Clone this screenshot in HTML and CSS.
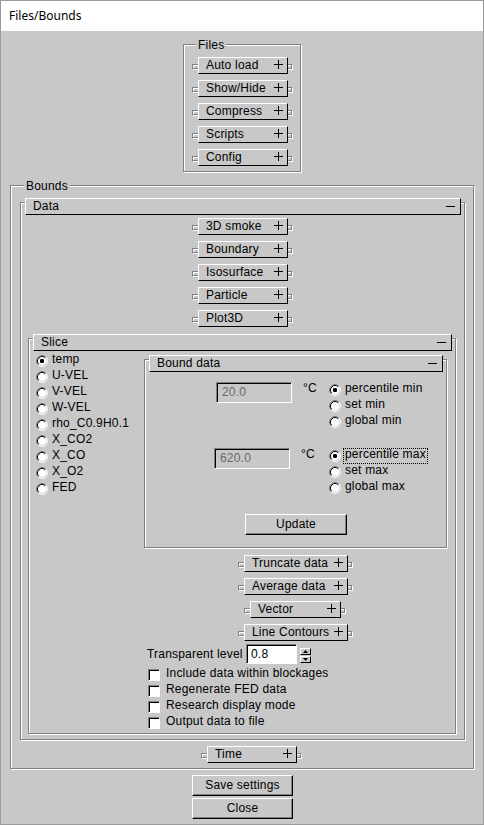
FILE: index.html
```html
<!DOCTYPE html>
<html>
<head>
<meta charset="utf-8">
<title>Files/Bounds</title>
<link rel="stylesheet" href="styles.css">
</head>
<body>
<svg class="defs" width="0" height="0" aria-hidden="true">
  <symbol id="radio-off" viewBox="0 0 12 12">
    <circle cx="6" cy="6" r="4.5" fill="#fff"/>
    <path d="M2.11 9.89A5.5 5.5 0 0 1 9.89 2.11" fill="none" stroke="#808080"/>
    <path d="M9.89 2.11A5.5 5.5 0 0 1 2.11 9.89" fill="none" stroke="#fff"/>
    <path d="M2.82 9.18A4.5 4.5 0 0 1 9.18 2.82" fill="none" stroke="#000"/>
    <path d="M9.18 2.82A4.5 4.5 0 0 1 2.82 9.18" fill="none" stroke="#dcdcdc"/>
  </symbol>
  <symbol id="radio-on" viewBox="0 0 12 12">
    <circle cx="6" cy="6" r="4.5" fill="#fff"/>
    <path d="M2.11 9.89A5.5 5.5 0 0 1 9.89 2.11" fill="none" stroke="#808080"/>
    <path d="M9.89 2.11A5.5 5.5 0 0 1 2.11 9.89" fill="none" stroke="#fff"/>
    <path d="M2.82 9.18A4.5 4.5 0 0 1 9.18 2.82" fill="none" stroke="#000"/>
    <path d="M9.18 2.82A4.5 4.5 0 0 1 2.82 9.18" fill="none" stroke="#dcdcdc"/>
    <rect x="4" y="4" width="4" height="4" rx="1.2" fill="#000"/>
  </symbol>
  <symbol id="plus" viewBox="0 0 9 9">
    <path d="M0 4.5H9M4.5 0V9" stroke="#000" stroke-width="1"/>
  </symbol>
  <symbol id="minus" viewBox="0 0 9 1">
    <path d="M0 0.5H9" stroke="#000" stroke-width="1"/>
  </symbol>
</svg>

<div class="window">
  <div class="titlebar">Files/Bounds</div>
  <div class="client">

    <div class="panel files">
      <div class="legend">Files</div>
      <div class="roll roll--files first"><div class="rbtn"><span>Auto load</span><svg class="plus"><use href="#plus"/></svg></div></div>
      <div class="roll roll--files"><div class="rbtn"><span>Show/Hide</span><svg class="plus"><use href="#plus"/></svg></div></div>
      <div class="roll roll--files"><div class="rbtn"><span>Compress</span><svg class="plus"><use href="#plus"/></svg></div></div>
      <div class="roll roll--files"><div class="rbtn"><span>Scripts</span><svg class="plus"><use href="#plus"/></svg></div></div>
      <div class="roll roll--files"><div class="rbtn"><span>Config</span><svg class="plus"><use href="#plus"/></svg></div></div>
    </div>

    <div class="panel bounds">
      <div class="legend">Bounds</div>

      <div class="rollout data">
        <div class="rhead"><span>Data</span><svg class="minus"><use href="#minus"/></svg></div>
        <div class="roll roll--data first"><div class="rbtn"><span>3D smoke</span><svg class="plus"><use href="#plus"/></svg></div></div>
        <div class="roll roll--data"><div class="rbtn"><span>Boundary</span><svg class="plus"><use href="#plus"/></svg></div></div>
        <div class="roll roll--data"><div class="rbtn"><span>Isosurface</span><svg class="plus"><use href="#plus"/></svg></div></div>
        <div class="roll roll--data"><div class="rbtn"><span>Particle</span><svg class="plus"><use href="#plus"/></svg></div></div>
        <div class="roll roll--data"><div class="rbtn"><span>Plot3D</span><svg class="plus"><use href="#plus"/></svg></div></div>

        <div class="rollout slice">
          <div class="rhead"><span>Slice</span><svg class="minus"><use href="#minus"/></svg></div>
          <div class="slice-body">
            <div class="radio-list">
              <div class="rrow"><svg class="radio"><use href="#radio-on"/></svg><span>temp</span></div>
              <div class="rrow"><svg class="radio"><use href="#radio-off"/></svg><span>U-VEL</span></div>
              <div class="rrow"><svg class="radio"><use href="#radio-off"/></svg><span>V-VEL</span></div>
              <div class="rrow"><svg class="radio"><use href="#radio-off"/></svg><span>W-VEL</span></div>
              <div class="rrow"><svg class="radio"><use href="#radio-off"/></svg><span>rho_C0.9H0.1</span></div>
              <div class="rrow"><svg class="radio"><use href="#radio-off"/></svg><span>X_CO2</span></div>
              <div class="rrow"><svg class="radio"><use href="#radio-off"/></svg><span>X_CO</span></div>
              <div class="rrow"><svg class="radio"><use href="#radio-off"/></svg><span>X_O2</span></div>
              <div class="rrow"><svg class="radio"><use href="#radio-off"/></svg><span>FED</span></div>
            </div>

            <div class="slice-right">
              <div class="rollout bound">
                <div class="rhead"><span>Bound data</span><svg class="minus"><use href="#minus"/></svg></div>
                <div class="brow">
                  <div class="tbox tbox--off">20.0</div>
                  <div class="unit">°C</div>
                  <div class="rgroup">
                    <div class="rrow"><svg class="radio"><use href="#radio-on"/></svg><span>percentile min</span></div>
                    <div class="rrow"><svg class="radio"><use href="#radio-off"/></svg><span>set min</span></div>
                    <div class="rrow"><svg class="radio"><use href="#radio-off"/></svg><span>global min</span></div>
                  </div>
                </div>
                <div class="brow brow--max">
                  <div class="tbox tbox--off">620.0</div>
                  <div class="unit">°C</div>
                  <div class="rgroup">
                    <div class="rrow"><svg class="radio"><use href="#radio-on"/></svg><span class="focus">percentile max</span></div>
                    <div class="rrow"><svg class="radio"><use href="#radio-off"/></svg><span>set max</span></div>
                    <div class="rrow"><svg class="radio"><use href="#radio-off"/></svg><span>global max</span></div>
                  </div>
                </div>
                <div class="btn update">Update</div>
              </div>

              <div class="roll roll--w first"><div class="rbtn"><span>Truncate data</span><svg class="plus"><use href="#plus"/></svg></div></div>
              <div class="roll roll--w"><div class="rbtn"><span>Average data</span><svg class="plus"><use href="#plus"/></svg></div></div>
              <div class="roll roll--v"><div class="rbtn"><span>Vector</span><svg class="plus"><use href="#plus"/></svg></div></div>
              <div class="roll roll--w"><div class="rbtn"><span>Line Contours</span><svg class="plus"><use href="#plus"/></svg></div></div>

              <div class="trow">
                <div class="tlabel">Transparent level</div>
                <div class="tbox tbox--small">0.8</div>
                <div class="spin">
                  <div class="spin-b"><svg class="arr" viewBox="0 0 5 3"><path d="M2.5 0L5 3H0Z" fill="#000"/></svg></div>
                  <div class="spin-b"><svg class="arr" viewBox="0 0 5 3"><path d="M0 0H5L2.5 3Z" fill="#000"/></svg></div>
                </div>
              </div>

              <div class="checks">
                <div class="crow"><div class="cb"></div><span>Include data within blockages</span></div>
                <div class="crow"><div class="cb"></div><span>Regenerate FED data</span></div>
                <div class="crow"><div class="cb"></div><span>Research display mode</span></div>
                <div class="crow"><div class="cb"></div><span>Output data to file</span></div>
              </div>
            </div>
          </div>
        </div>
      </div>

      <div class="roll roll--time"><div class="rbtn"><span>Time</span><svg class="plus"><use href="#plus"/></svg></div></div>
    </div>

    <div class="btn wide save">Save settings</div>
    <div class="btn wide close">Close</div>
  </div>
</div>
</body>
</html>
```

FILE: styles.css
```css
html, body {
  margin: 0;
  padding: 0;
}

body {
  width: 484px;
  height: 825px;
  overflow: hidden;
  background: #c8c8c8;
  font-family: "Liberation Sans", Arial, sans-serif;
  font-size: 12px;
  color: #000;
}

.defs {
  position: absolute;
  width: 0;
  height: 0;
  overflow: hidden;
}

.window {
  width: 484px;
  height: 825px;
  box-sizing: border-box;
  border: 1px solid #9a9a9a;
  background: #c8c8c8;
  display: flex;
  flex-direction: column;
}

.titlebar {
  flex: none;
  height: 30px;
  line-height: 30px;
  padding-left: 8px;
  background: #fff;
  font-family: "Noto Sans", "Open Sans", sans-serif;
  font-size: 12px;
}

.client {
  flex: 1;
  display: flex;
  flex-direction: column;
  align-items: flex-start;
  letter-spacing: 0.2px;
}

/* etched group panels */
.panel,
.rollout {
  box-sizing: border-box;
  border: 1px solid #808080;
  box-shadow: inset 1px 1px 0 #fff, 1px 1px 0 #fff;
  display: flex;
  flex-direction: column;
  align-items: flex-start;
}

.legend {
  width: max-content;
  height: 14px;
  line-height: 14px;
  margin: -7px 0 -7px 4px;
  padding: 0 2px;
  background: #c8c8c8;
}

.files {
  width: 118px;
  margin: 13px 0 0 182px;
  padding: 0 0 5px 8px;
}

.bounds {
  width: 464px;
  margin: 13px 0 0 9px;
  padding: 0 8px 5px 9px;
}

/* collapsed rollouts */
.roll {
  position: relative;
  display: flex;
  width: 101px;
  height: 17px;
  padding-left: 6px;
  box-sizing: border-box;
  flex: none;
}

.roll::before {
  content: "";
  position: absolute;
  left: 0;
  top: 7px;
  width: 100px;
  height: 5px;
  box-sizing: border-box;
  border: 1px solid #808080;
  box-shadow: inset 1px 1px 0 #fff, 1px 1px 0 #fff;
}

.roll + .roll {
  margin-top: 6px;
}

.roll--files.first {
  margin-top: 12px;
}

.rbtn {
  position: relative;
  display: flex;
  width: 90px;
  height: 17px;
  box-sizing: border-box;
  border: 1px solid;
  border-color: #fff #000 #000 #fff;
  padding: 0 4px 0 7px;
  line-height: 14px;
  background: #c8c8c8;
  white-space: nowrap;
}

.plus {
  width: 9px;
  height: 9px;
  margin: 2px 0 0 auto;
  flex: none;
}

.roll--data {
  margin-left: 171px;
}

.roll--data.first {
  margin-top: 3px;
}

.roll--time {
  margin: 6px 0 0 181px;
}

.roll--w {
  width: 115px;
  margin-left: 94px;
}

.roll--w::before {
  width: 114px;
}

.roll--w .rbtn {
  width: 104px;
}

.roll--w.first {
  margin-top: 7px;
}

.roll--v {
  width: 102px;
  margin-left: 100px;
}

.roll--v::before {
  width: 101px;
}

.roll--v .rbtn {
  width: 91px;
}

/* expanded rollouts */
.rhead {
  align-self: stretch;
  display: flex;
  height: 17px;
  box-sizing: border-box;
  margin: -5px 3px 0 4px;
  border: 1px solid;
  border-color: #fff #000 #000 #fff;
  padding: 0 5px 0 7px;
  line-height: 14px;
  background: #c8c8c8;
}

.minus {
  width: 9px;
  height: 1px;
  margin: 7px 0 0 auto;
  flex: none;
}

.data {
  width: 445px;
  margin-top: 16px;
  padding-bottom: 5px;
}

.slice {
  width: 428px;
  margin: 11px 0 0 7px;
  padding-bottom: 4px;
}

.slice-body {
  display: flex;
  align-items: flex-start;
}

.radio-list {
  width: 115px;
  box-sizing: border-box;
  padding-left: 7px;
}

.rrow {
  display: flex;
  height: 16px;
  line-height: 16px;
  white-space: nowrap;
}

.radio {
  width: 12px;
  height: 12px;
  margin: 4px 4px 0 0;
  flex: none;
}

.slice-right {
  width: 303px;
  display: flex;
  flex-direction: column;
  align-items: flex-start;
}

.bound {
  width: 303px;
  margin-top: 8px;
  padding-bottom: 12px;
}

.brow {
  display: flex;
  align-items: flex-start;
  margin-top: 8px;
}

.brow--max {
  margin-top: 18px;
}

.tbox {
  box-sizing: border-box;
  border: 1px solid;
  border-color: #808080 #fff #fff #808080;
  box-shadow: inset 1px 1px 0 #000;
  flex: none;
}

.tbox--off {
  width: 76px;
  height: 21px;
  margin: 2px 0 0 71px;
  padding-left: 5px;
  line-height: 19px;
  color: #6a6a6a;
}

.brow--max .tbox--off {
  margin-left: 69px;
}

.unit {
  width: 26px;
  margin-left: 11px;
  line-height: 16px;
  flex: none;
}

.brow--max .unit {
  width: 28px;
}

.focus {
  box-sizing: border-box;
  height: 16px;
  margin: 2px 0 0 -2px;
  padding: 0 1px;
  border: 1px dotted #000;
  line-height: 10px;
}

.btn {
  box-sizing: border-box;
  border: 1px solid;
  border-color: #fff #000 #000 #fff;
  box-shadow: inset -1px -1px 0 #808080;
  text-align: center;
  line-height: 19px;
  height: 21px;
  background: #c8c8c8;
}

.update {
  width: 102px;
  margin: 20px 0 0 100px;
}

.trow {
  display: flex;
  align-items: flex-start;
  margin-top: 3px;
}

.tlabel {
  width: 99px;
  margin: 2px 0 0 3px;
  line-height: 16px;
  white-space: nowrap;
}

.tbox--small {
  width: 51px;
  height: 20px;
  padding-left: 4px;
  line-height: 18px;
  background: #fff;
}

.spin {
  width: 11px;
  height: 15px;
  margin: 4px 0 0 3px;
  display: flex;
  flex-direction: column;
  justify-content: space-between;
}

.spin-b {
  height: 7px;
  box-sizing: border-box;
  border: 1px solid;
  border-color: #fff #000 #000 #fff;
  display: flex;
  align-items: center;
  justify-content: center;
}

.arr {
  width: 5px;
  height: 3px;
}

.checks {
  margin: 1px 0 0 4px;
}

.crow {
  display: flex;
  height: 16px;
  line-height: 16px;
  white-space: nowrap;
}

.cb {
  width: 12px;
  height: 12px;
  box-sizing: border-box;
  margin: 4px 6px 0 0;
  background: #fff;
  border: 1px solid;
  border-color: #808080 #fff #fff #808080;
  box-shadow: inset 1px 1px 0 #000;
  flex: none;
}

.wide {
  width: 101px;
  margin-left: 191px;
}

.save {
  margin-top: 6px;
}

.close {
  margin-top: 2px;
}
```
